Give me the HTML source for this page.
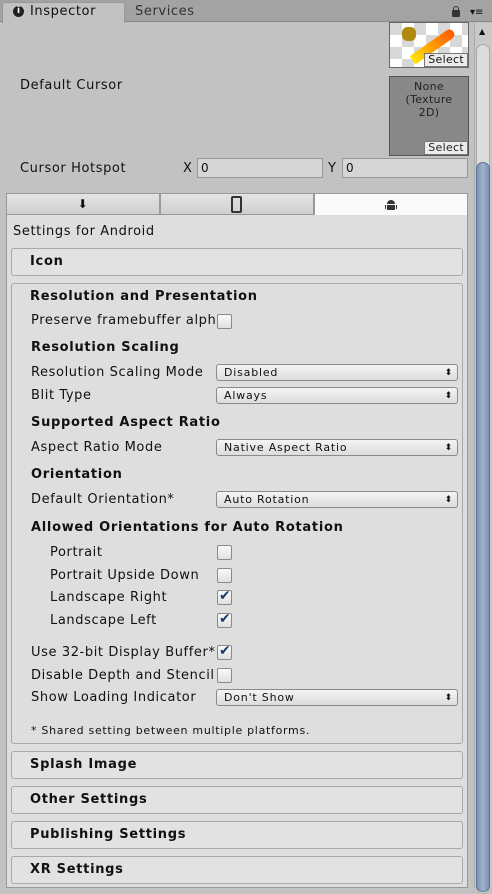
<!DOCTYPE html>
<html><head><meta charset="utf-8"><style>
*{box-sizing:border-box;margin:0;padding:0}
body{width:492px;height:888px;overflow:hidden;background:#c2c2c2;font-family:"DejaVu Sans","Liberation Sans",sans-serif;font-size:13px;letter-spacing:0.6px;color:#111;position:relative}
.a{position:absolute;white-space:nowrap}
.b{font-weight:bold;letter-spacing:0.7px}
.dd{position:absolute;left:216px;width:242px;height:17px;border:1px solid #8a8a8a;border-radius:3px;background:linear-gradient(#f4f4f4,#dcdcdc);font-size:11px;padding:1px 7px;line-height:14px;letter-spacing:0.8px}
.dd:after{content:"⬍";position:absolute;right:4px;top:1px;font-size:9px}
.cb{position:absolute;left:217px;width:15px;height:15px;border:1px solid #8a8a8a;border-radius:2px;background:linear-gradient(#fafafa,#e0e0e0)}
.ck:after{content:"✔";position:absolute;left:1px;top:-3px;font-size:14px;color:#1d3a66}
.hdr{position:absolute;left:11px;width:452px;height:28px;border:1px solid #a8a8a8;border-radius:3px;background:#e2e2e2;font-weight:bold;padding:5px 18px;font-size:13px;letter-spacing:0.7px}
.sel{position:absolute;right:0;bottom:0;background:#ececec;border:1px solid #777;font-size:11px;padding:0 3px;line-height:12px;letter-spacing:0.3px}
</style></head><body>
<div class="a" style="left:0;top:0;width:492px;height:22px;background:#a3a3a3;border-bottom:1px solid #888"></div>
<div class="a" style="left:2px;top:2px;width:123px;height:21px;background:#c2c2c2;border:1px solid #999;border-bottom:none;border-radius:3px 3px 0 0"></div>
<div class="a" style="left:13px;top:6px;width:11px;height:11px;border-radius:50%;background:#222;color:#fff;font-size:9px;text-align:center;line-height:11px;font-weight:bold;letter-spacing:0">i</div>
<div class="a" style="left:30px;top:4px;font-size:13px">Inspector</div>
<div class="a" style="left:135px;top:4px;font-size:13px;color:#333">Services</div>
<div class="a" style="left:452px;top:10px;width:8px;height:7px;background:#333;border-radius:1px"></div>
<div class="a" style="left:453px;top:6px;width:6px;height:6px;border:1.5px solid #333;border-bottom:none;border-radius:3px 3px 0 0"></div>
<div class="a" style="left:470px;top:7px;font-size:10px;letter-spacing:0">▾≡</div>
<!-- scrollbar -->
<div class="a" style="left:474px;top:23px;width:18px;height:865px;background:#c9c9c9;border-left:1px solid #aaa"></div>
<div class="a" style="left:479px;top:27px;font-size:8px">▲</div>
<div class="a" style="left:476px;top:44px;width:14px;height:850px;border-radius:7px;background:#dcdcdc;border:1px solid #aaa"></div>
<div class="a" style="left:476px;top:162px;width:14px;height:730px;border-radius:7px;background:linear-gradient(90deg,#7d93b5,#9fb2cf,#7d93b5);border:1px solid #5f7394"></div>
<!-- thumbnail -->
<div class="a" style="left:389px;top:22px;width:80px;height:46px;border:1px solid #666;background:repeating-conic-gradient(#fff 0 25%,#d8d8d8 0 50%) 0 0/24px 24px;overflow:hidden">
<div class="a" style="left:12px;top:4px;width:14px;height:14px;background:#b08a10;border-radius:40%"></div>
<div class="a" style="left:18px;top:18px;width:50px;height:10px;background:linear-gradient(90deg,#ffe800,#ff9a00,#ff5a00);transform:rotate(-35deg);border-radius:0 8px 8px 0"></div>
<div class="sel">Select</div></div>
<div class="a" style="left:20px;top:78px">Default Cursor</div>
<div class="a" style="left:389px;top:76px;width:80px;height:80px;border:1px solid #555;background:#888;color:#222;font-size:11px;text-align:center;line-height:13px;padding-top:3px;letter-spacing:0.3px">None<br>(Texture<br>2D)<div class="sel">Select</div></div>
<div class="a" style="left:20px;top:161px">Cursor Hotspot</div>
<div class="a" style="left:183px;top:161px">X</div>
<div class="a" style="left:197px;top:158px;width:126px;height:20px;border:1px solid #999;background:#d6d6d6;padding:2px 3px;font-size:12px">0</div>
<div class="a" style="left:328px;top:161px">Y</div>
<div class="a" style="left:342px;top:158px;width:126px;height:20px;border:1px solid #999;background:#d6d6d6;padding:2px 3px;font-size:12px">0</div>
<!-- platform tabs -->
<div class="a" style="left:6px;top:193px;width:462px;height:695px;background:#dedede;border:1px solid #999"></div>
<div class="a" style="left:6px;top:193px;width:154px;height:22px;background:linear-gradient(#e4e4e4,#cfcfcf);border:1px solid #999;text-align:center;font-size:12px;line-height:20px">⬇</div>
<div class="a" style="left:160px;top:193px;width:154px;height:22px;background:linear-gradient(#e4e4e4,#cfcfcf);border:1px solid #999"><div class="a" style="left:70px;top:2px;width:11px;height:17px;border:2px solid #333;border-radius:2px"></div></div>
<div class="a" style="left:314px;top:193px;width:154px;height:22px;background:#fafafa;border:1px solid #999;border-bottom:none"><div class="a" style="left:72px;top:6px;width:8px;height:4px;background:#333;border-radius:4px 4px 0 0"></div><div class="a" style="left:72px;top:11px;width:8px;height:5px;background:#333"></div><div class="a" style="left:70px;top:11px;width:1px;height:4px;background:#333"></div><div class="a" style="left:81px;top:11px;width:1px;height:4px;background:#333"></div></div>
<div class="a" style="left:13px;top:224px">Settings for Android</div>
<div class="hdr" style="top:248px">Icon</div>
<div class="a" style="left:11px;top:283px;width:452px;height:461px;border:1px solid #a8a8a8;border-radius:3px"></div>
<div class="a b" style="left:30px;top:289px">Resolution and Presentation</div>
<div class="a" style="left:31px;top:313px;width:186px;overflow:hidden">Preserve framebuffer alpha</div><div class="cb" style="top:314px"></div>
<div class="a b" style="left:31px;top:340px">Resolution Scaling</div>
<div class="a" style="left:31px;top:365px">Resolution Scaling Mode</div><div class="dd" style="top:364px">Disabled</div>
<div class="a" style="left:31px;top:388px">Blit Type</div><div class="dd" style="top:387px">Always</div>
<div class="a b" style="left:31px;top:415px">Supported Aspect Ratio</div>
<div class="a" style="left:31px;top:440px">Aspect Ratio Mode</div><div class="dd" style="top:439px">Native Aspect Ratio</div>
<div class="a b" style="left:31px;top:467px">Orientation</div>
<div class="a" style="left:31px;top:492px">Default Orientation*</div><div class="dd" style="top:491px">Auto Rotation</div>
<div class="a b" style="left:31px;top:520px">Allowed Orientations for Auto Rotation</div>
<div class="a" style="left:50px;top:545px">Portrait</div><div class="cb" style="top:545px"></div>
<div class="a" style="left:50px;top:568px">Portrait Upside Down</div><div class="cb" style="top:568px"></div>
<div class="a" style="left:50px;top:590px">Landscape Right</div><div class="cb ck" style="top:590px"></div>
<div class="a" style="left:50px;top:613px">Landscape Left</div><div class="cb ck" style="top:613px"></div>
<div class="a" style="left:31px;top:645px;width:186px;overflow:hidden">Use 32-bit Display Buffer*</div><div class="cb ck" style="top:645px"></div>
<div class="a" style="left:31px;top:668px;width:186px;overflow:hidden">Disable Depth and Stencil</div><div class="cb" style="top:668px"></div>
<div class="a" style="left:31px;top:690px">Show Loading Indicator</div><div class="dd" style="top:689px">Don't Show</div>
<div class="a" style="left:31px;top:724px;font-size:11px;letter-spacing:0.7px">* Shared setting between multiple platforms.</div>
<div class="hdr" style="top:751px">Splash Image</div>
<div class="hdr" style="top:786px">Other Settings</div>
<div class="hdr" style="top:821px">Publishing Settings</div>
<div class="hdr" style="top:856px">XR Settings</div>
</body></html>
